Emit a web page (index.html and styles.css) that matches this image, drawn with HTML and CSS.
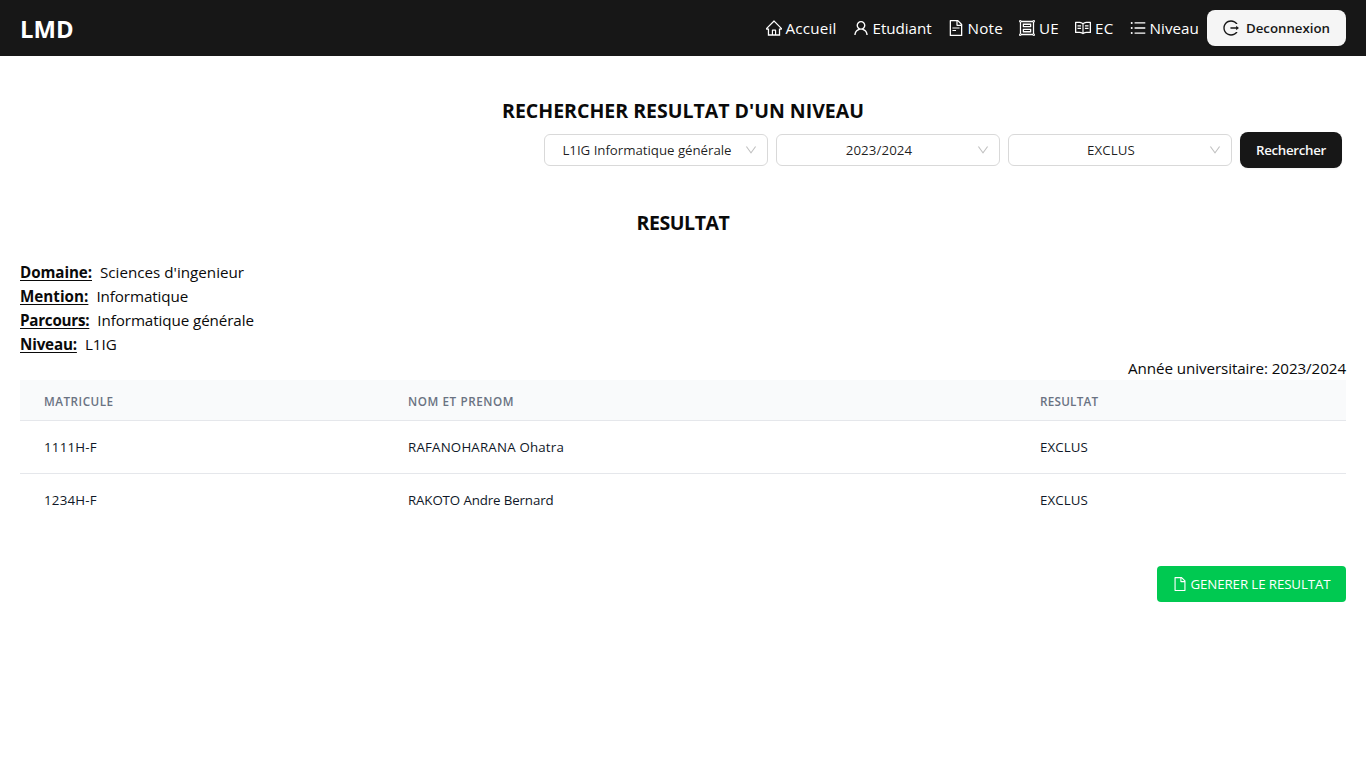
FILE: index.html
```html
<!DOCTYPE html>
<html lang="fr">
<head>
<meta charset="utf-8">
<title>LMD</title>
<link rel="stylesheet" href="styles.css">
</head>
<body>
<svg class="sprite" aria-hidden="true">
  <symbol id="down" viewBox="64 64 896 896"><path d="M884 256h-75c-5.1 0-9.9 2.5-12.9 6.6L512 654.2 227.9 262.6c-3-4.1-7.8-6.6-12.9-6.6h-75c-6.5 0-10.3 7.4-6.5 12.7l352.6 486.1c12.8 17.6 39 17.6 51.7 0l352.6-486.1c3.9-5.3.1-12.7-6.4-12.7z"/></symbol>
</svg>
<header class="navbar">
  <a class="brand">LMD</a>
  <nav class="links">
    <a class="link accueil"><svg class="icon" viewBox="64 64 896 896"><path d="M946.5 505L560.1 118.8l-25.9-25.9a31.5 31.5 0 00-44.4 0L77.5 505a63.9 63.9 0 00-18.8 46c.4 35.2 29.7 63.3 64.9 63.3h42.5V940h691.8V614.3h43.4c17.1 0 33.2-6.7 45.3-18.8a63.6 63.6 0 0018.7-45.3c0-17-6.7-33.1-18.8-45.2zM568 868H456V664h112v204zm217.9-325.7V868H632V640c0-22.1-17.9-40-40-40H432c-22.1 0-40 17.9-40 40v228H238.1V542.3h-96l370-369.7 23.1 23.1L882 542.3h-96.1z"/></svg><span>Accueil</span></a>
    <a class="link etudiant"><svg class="icon" viewBox="64 64 896 896"><path d="M858.5 763.6a374 374 0 00-80.6-119.5 375.63 375.63 0 00-119.5-80.6c-.4-.2-.8-.3-1.2-.5C719.5 518 760 444.7 760 362c0-137-111-248-248-248S264 225 264 362c0 82.7 40.5 156 102.8 201.1-.4.2-.8.3-1.2.5-44.8 18.9-85 46-119.5 80.6a375.63 375.63 0 00-80.6 119.5A371.7 371.7 0 00136 901.8a8 8 0 008 8.2h60c4.4 0 7.9-3.5 8-7.8 2-77.2 33-149.5 87.8-204.3 56.7-56.7 132-87.9 212.2-87.9s155.5 31.2 212.2 87.9C779 752.7 810 825 812 902.2c.1 4.4 3.6 7.8 8 7.8h60a8 8 0 008-8.2c-1-47.8-10.9-94.3-29.5-138.2zM512 534c-45.9 0-89.1-17.9-121.6-50.4S340 407.9 340 362c0-45.9 17.9-89.1 50.4-121.6S466.1 190 512 190s89.1 17.9 121.6 50.4S684 316.1 684 362c0 45.9-17.9 89.1-50.4 121.6S557.9 534 512 534z"/></svg><span>Etudiant</span></a>
    <a class="link note"><svg class="icon" viewBox="64 64 896 896"><path d="M854.6 288.6L639.4 73.4c-6-6-14.1-9.4-22.6-9.4H192c-17.7 0-32 14.3-32 32v832c0 17.7 14.3 32 32 32h640c17.7 0 32-14.3 32-32V311.3c0-8.5-3.4-16.7-9.4-22.7zM790.2 326H602V137.8L790.2 326zm1.8 562H232V136h302v216a42 42 0 0042 42h216v494zM504 618H320c-4.4 0-8 3.6-8 8v48c0 4.4 3.6 8 8 8h184c4.4 0 8-3.6 8-8v-48c0-4.4-3.6-8-8-8zM312 490v48c0 4.4 3.6 8 8 8h384c4.4 0 8-3.6 8-8v-48c0-4.4-3.6-8-8-8H320c-4.4 0-8 3.6-8 8z"/></svg><span>Note</span></a>
    <a class="link ue"><svg class="icon" viewBox="64 64 896 896"><path d="M912 820.1V203.9c28-9.9 48-36.6 48-67.9 0-39.8-32.2-72-72-72-31.3 0-58 20-67.9 48H203.9C194 84 167.3 64 136 64c-39.8 0-72 32.2-72 72 0 31.3 20 58 48 67.9v616.2C84 830 64 856.7 64 888c0 39.8 32.2 72 72 72 31.3 0 58-20 67.9-48h616.2c9.9 28 36.6 48 67.9 48 39.8 0 72-32.2 72-72 0-31.3-20-58-48-67.9zM888 112c13.2 0 24 10.8 24 24s-10.8 24-24 24-24-10.8-24-24 10.8-24 24-24zM136 912c-13.2 0-24-10.8-24-24s10.8-24 24-24 24 10.8 24 24-10.8 24-24 24zm0-752c-13.2 0-24-10.8-24-24s10.8-24 24-24 24 10.8 24 24-10.8 24-24 24zm704 680H184V184h656v656zm48 72c-13.2 0-24-10.8-24-24s10.8-24 24-24 24 10.8 24 24-10.8 24-24 24z"/><path d="M288 474h448c8.8 0 16-7.2 16-16V282c0-8.8-7.2-16-16-16H288c-8.8 0-16 7.2-16 16v176c0 8.8 7.2 16 16 16zm56-136h336v64H344v-64zm-56 420h448c8.8 0 16-7.2 16-16V566c0-8.8-7.2-16-16-16H288c-8.8 0-16 7.2-16 16v176c0 8.8 7.2 16 16 16zm56-136h336v64H344v-64z"/></svg><span>UE</span></a>
    <a class="link ec"><svg class="icon" viewBox="64 64 896 896"><path d="M928 161H699.2c-49.1 0-97.1 14.1-138.4 40.7L512 233l-48.8-31.3A255.2 255.2 0 00324.8 161H96c-17.7 0-32 14.3-32 32v568c0 17.7 14.3 32 32 32h228.8c49.1 0 97.1 14.1 138.4 40.7l44.4 28.6c1.3.8 2.8 1.3 4.3 1.3s3-.4 4.3-1.3l44.4-28.6C602 807.1 650.1 793 699.2 793H928c17.7 0 32-14.3 32-32V193c0-17.7-14.3-32-32-32zM324.8 721H136V233h188.8c35.4 0 69.8 10.1 99.5 29.2l48.8 31.3 6.9 4.5v462c-47.6-25.6-100.8-39-155.2-39zm563.2 0H699.2c-54.4 0-107.6 13.4-155.2 39V298l6.9-4.5 48.8-31.3c29.7-19.1 64.1-29.2 99.5-29.2H888v488zM204 361h200v60H204zM620 361h200v60H620zM204 501h200v60H204zM620 501h200v60H620z"/></svg><span>EC</span></a>
    <a class="link niveau"><svg class="icon" viewBox="64 64 896 896"><path d="M320 192h600v72H320zM320 476h600v72H320zM320 760h600v72H320zM104 228a56 56 0 10112 0 56 56 0 10-112 0zM104 512a56 56 0 10112 0 56 56 0 10-112 0zM104 796a56 56 0 10112 0 56 56 0 10-112 0z"/></svg><span>Niveau</span></a>
    <button class="btn logout"><svg class="icon" viewBox="64 64 896 896"><path d="M868 732h-70.3c-4.8 0-9.3 2.1-12.3 5.8-7 8.5-14.5 16.7-22.4 24.5a353.84 353.84 0 01-112.7 75.9A352.8 352.8 0 01512.4 866c-47.9 0-94.3-9.4-137.9-27.8a353.84 353.84 0 01-112.7-75.9 353.28 353.28 0 01-76-112.5C167.3 606.2 158 559.9 158 512s9.4-94.2 27.8-137.8c17.8-42.1 43.4-80 76-112.5s70.5-58.1 112.7-75.9c43.6-18.4 90-27.8 137.9-27.8 47.9 0 94.3 9.3 137.9 27.8 42.2 17.8 80.1 43.4 112.7 75.9 7.9 7.9 15.3 16.1 22.4 24.5 3 3.7 7.6 5.8 12.3 5.8H868c6.3 0 10.2-7 6.7-12.3C798 160.5 663.8 81.6 511.3 82 271.7 82.6 79.6 277.1 82 516.4 84.4 751.9 276.2 942 512.4 942c152.1 0 285.7-78.8 362.3-197.7 3.4-5.3-.4-12.3-6.7-12.3zm88.9-226.3L815 393.7c-5.3-4.2-13-.4-13 6.3v76H488c-4.4 0-8 3.6-8 8v56c0 4.4 3.6 8 8 8h314v76c0 6.7 7.8 10.5 13 6.3l141.9-112a8 8 0 000-12.6z"/></svg><span>Deconnexion</span></button>
  </nav>
</header>
<main class="page">
  <h1 class="title search-title">RECHERCHER RESULTAT D'UN NIVEAU</h1>
  <div class="filters">
    <div class="select"><span class="value">L1IG Informatique générale</span><svg class="arrow"><use href="#down"/></svg></div>
    <div class="select"><span class="value year">2023/2024</span><svg class="arrow"><use href="#down"/></svg></div>
    <div class="select"><span class="value status">EXCLUS</span><svg class="arrow"><use href="#down"/></svg></div>
    <button class="btn search">Rechercher</button>
  </div>
  <h1 class="title result-title">RESULTAT</h1>
  <dl class="info">
    <div class="row"><dt class="domaine">Domaine:</dt><dd>Sciences d'ingenieur</dd></div>
    <div class="row"><dt class="mention">Mention:</dt><dd class="tight">Informatique</dd></div>
    <div class="row"><dt class="parcours">Parcours:</dt><dd class="tight">Informatique générale</dd></div>
    <div class="row"><dt class="level">Niveau:</dt><dd>L1IG</dd></div>
  </dl>
  <p class="session">Année universitaire: 2023/2024</p>
  <table class="results">
    <thead><tr><th class="c1">MATRICULE</th><th class="c2">NOM ET PRENOM</th><th class="c3">RESULTAT</th></tr></thead>
    <tbody>
      <tr><td class="num">1111H-F</td><td class="wide">RAFANOHARANA Ohatra</td><td class="status">EXCLUS</td></tr>
      <tr><td class="num">1234H-F</td><td class="narrow">RAKOTO Andre Bernard</td><td class="status">EXCLUS</td></tr>
    </tbody>
  </table>
  <div class="actions">
    <button class="generate"><svg class="icon-sm" viewBox="64 64 896 896"><path d="M854.6 288.6L639.4 73.4c-6-6-14.1-9.4-22.6-9.4H192c-17.7 0-32 14.3-32 32v832c0 17.7 14.3 32 32 32h640c17.7 0 32-14.3 32-32V311.3c0-8.5-3.4-16.7-9.4-22.7zM790.2 326H602V137.8L790.2 326zm1.8 562H232V136h302v216a42 42 0 0042 42h216v494z"/></svg><span>GENERER LE RESULTAT</span></button>
  </div>
</main>
</body>
</html>
```
FILE: styles.css
```css
* { box-sizing: border-box; margin: 0; padding: 0; }
body { font-family: "Open Sans", "Noto Sans", sans-serif; font-size: 15.2px; line-height: 24px; color: #0a0a0a; background: #fff; }
svg { fill: currentColor; flex: none; display: block; }
.sprite { display: none; }
button { font: inherit; border: 0; white-space: nowrap; }

.navbar { display: flex; align-items: center; justify-content: space-between; height: 56px; padding: 0 20px; background: #171717; color: #fff; }
.brand { font-size: 23.8px; font-weight: 700; line-height: 32px; letter-spacing: 0; padding-top: 2px; }
.links { display: flex; align-items: center; }
.link { display: flex; align-items: center; gap: 4px; padding: 0 8px; white-space: nowrap; }
.icon { width: 16px; height: 16px; }
.accueil { letter-spacing: .19px; }
.etudiant { letter-spacing: -.06px; }
.note, .ue, .ec { letter-spacing: .24px; }
.niveau { letter-spacing: .06px; }

.btn { display: flex; align-items: center; justify-content: center; height: 36px; border-radius: 8px; font-size: 13.3px; font-weight: 600; line-height: 20px; }
.logout { gap: 7px; width: 139px; background: #f5f5f5; color: #171717; letter-spacing: -.03px; box-shadow: 0 1px 2px rgba(0, 0, 0, .05); }
.search { width: 102px; background: #171717; color: #fafafa; letter-spacing: -.3px; box-shadow: 0 1px 2px rgba(0, 0, 0, .05); }

.page { padding: 41px 20px 0; }
.title { font-size: 19.5px; font-weight: 700; line-height: 28px; text-align: center; }
.search-title { letter-spacing: 0; }
.result-title { margin-top: 41px; letter-spacing: -.42px; }

.filters { display: flex; justify-content: flex-end; align-items: center; gap: 8px; margin-top: 7px; padding-right: 4px; }
.select { display: flex; align-items: center; width: 224px; height: 32px; padding: 0 10px; border: 1px solid #d9d9d9; border-radius: 6px; font-size: 13.3px; color: rgba(0, 0, 0, .88); }
.value { flex: 1; text-align: center; padding-left: 1px; padding-right: 7px; letter-spacing: -.04px; white-space: nowrap; }
.value.year { letter-spacing: .09px; }
.status, .value.status { letter-spacing: .1px; }
.arrow { width: 12px; height: 12px; color: rgba(0, 0, 0, .25); }

.info { margin-top: 23px; }
.row { display: flex; gap: 8px; }
dt { font-weight: 700; text-decoration: underline; text-underline-offset: 2px; text-decoration-thickness: 1px; }
.domaine { letter-spacing: -.08px; }
.mention { letter-spacing: .02px; }
.parcours { letter-spacing: -.25px; }
.level { letter-spacing: -.17px; }
.tight { letter-spacing: -.09px; }
.session { text-align: right; letter-spacing: -.083px; }

.results { width: 100%; table-layout: fixed; border-collapse: separate; border-spacing: 0; text-align: left; }
th { height: 40px; padding: 1px 24px 0; background: #f9fafb; color: #6a7282; font-size: 11.7px; font-weight: 600; line-height: 16px; }
.c1 { width: 364px; letter-spacing: .5px; }
.c2 { width: 632px; letter-spacing: .58px; }
.c3 { letter-spacing: .25px; }
td { height: 53px; padding: 0 24px; border-top: 1px solid #e5e7eb; color: #101828; font-size: 13.3px; line-height: 20px; }
.num { letter-spacing: .23px; }
.wide { letter-spacing: .19px; }
.narrow { letter-spacing: -.12px; }

.actions { display: flex; justify-content: flex-end; margin-top: 40px; }
.generate { display: flex; align-items: center; justify-content: center; gap: 4px; width: 189px; height: 36px; border-radius: 4px; background: #00c951; color: #fff; font-size: 13.3px; letter-spacing: -.11px; }
.icon-sm { width: 14px; height: 14px; }
```
